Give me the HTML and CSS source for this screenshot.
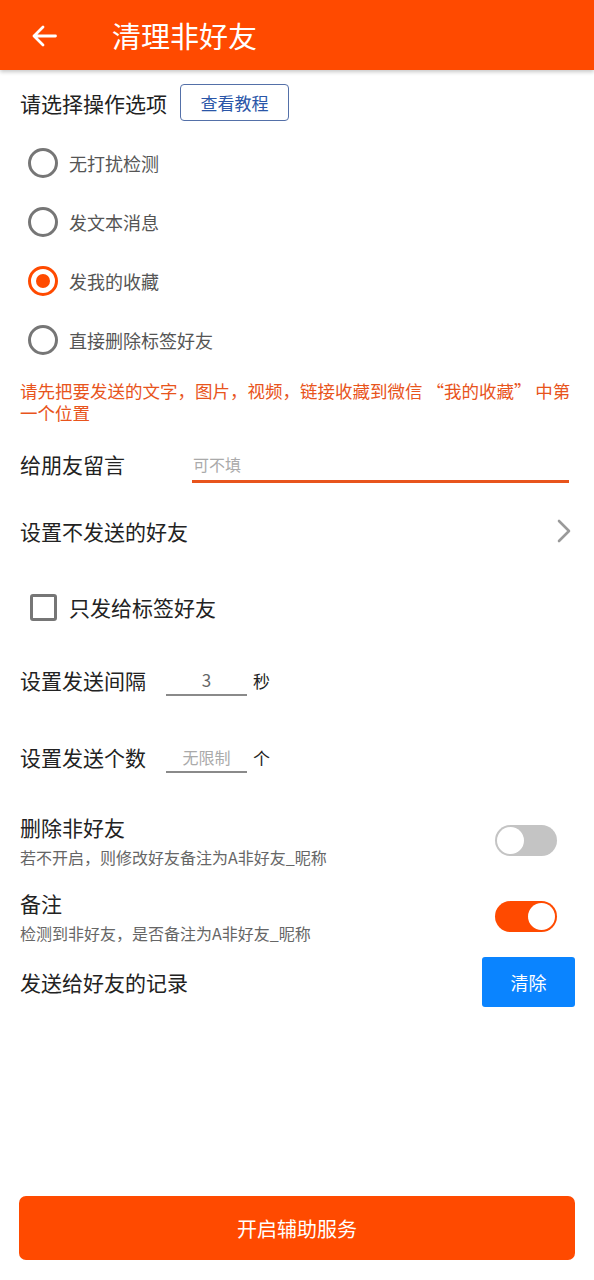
FILE: index.html
```html
<!DOCTYPE html>
<html lang="zh">
<head>
<meta charset="utf-8">
<title>清理非好友</title>
<link rel="stylesheet" href="styles.css">
</head>
<body>
<div class="page">
  <header class="appbar">
    <svg class="back" width="26" height="22" viewBox="0 0 26 22"><path d="M24.5 11H3M12 2L3 11l9 9" fill="none" stroke="#fff" stroke-width="2.8" stroke-linecap="round" stroke-linejoin="round"/></svg>
    <h1 class="title">清理非好友</h1>
  </header>

  <main class="content">
    <div class="top-row">
      <span class="label">请选择操作选项</span>
      <span class="tutorial-btn">查看教程</span>
    </div>

    <div class="radio-group">
      <div class="radio-row"><span class="radio"></span><span class="radio-text">无打扰检测</span></div>
      <div class="radio-row"><span class="radio"></span><span class="radio-text">发文本消息</span></div>
      <div class="radio-row"><span class="radio checked"></span><span class="radio-text">发我的收藏</span></div>
      <div class="radio-row"><span class="radio"></span><span class="radio-text">直接删除标签好友</span></div>
    </div>

    <p class="note">请先把要发送的文字，图片，视频，链接收藏到微信 “我的收藏” 中第一个位置</p>

    <div class="msg-row">
      <span class="label">给朋友留言</span>
      <input class="msg-input" type="text" placeholder="可不填">
    </div>

    <div class="nav-row">
      <span class="label">设置不发送的好友</span>
      <svg class="chevron" width="14" height="24" viewBox="0 0 14 24"><path d="M2 2l10 10-10 10" fill="none" stroke="#9a9a9a" stroke-width="2.6" stroke-linecap="round" stroke-linejoin="round"/></svg>
    </div>

    <div class="check-row">
      <span class="checkbox"></span>
      <span class="label">只发给标签好友</span>
    </div>

    <div class="num-row interval">
      <span class="label">设置发送间隔</span>
      <input class="num-input" type="text" value="3">
      <span class="unit">秒</span>
    </div>

    <div class="num-row count">
      <span class="label">设置发送个数</span>
      <input class="num-input" type="text" placeholder="无限制">
      <span class="unit">个</span>
    </div>

    <div class="switch-row first">
      <div class="switch-text">
        <span class="label">删除非好友</span>
        <span class="sub">若不开启，则修改好友备注为A非好友_昵称</span>
      </div>
      <span class="switch"><span class="thumb"></span></span>
    </div>

    <div class="switch-row">
      <div class="switch-text">
        <span class="label">备注</span>
        <span class="sub">检测到非好友，是否备注为A非好友_昵称</span>
      </div>
      <span class="switch on"><span class="thumb"></span></span>
    </div>

    <div class="record-row">
      <span class="label">发送给好友的记录</span>
      <span class="clear-btn">清除</span>
    </div>
  </main>

  <footer class="footer">
    <div class="start-btn">开启辅助服务</div>
  </footer>
</div>
</body>
</html>
```

FILE: styles.css
```css
* { box-sizing: border-box; }
html, body { margin: 0; padding: 0; background: #fff; }
body {
  font-family: "Noto Sans CJK SC", "Noto Sans", sans-serif;
  color: #222;
}
.page {
  min-height: 1280px;
  display: flex;
  flex-direction: column;
}
.appbar {
  height: 70px;
  background: #ff4a00;
  display: flex;
  align-items: center;
  box-shadow: 0 2px 4px rgba(0, 0, 0, 0.22);
  position: relative;
  z-index: 1;
}
.back { margin-left: 31px; margin-top: 1px; }
.title {
  margin: 0 0 0 55px;
  font-size: 29px;
  font-weight: 400;
  color: #fff;
  line-height: 1;
}
.content {
  padding: 14px 19px 0 20px;
}
.label {
  font-size: 21px;
  line-height: 28px;
  color: #222;
}
.top-row {
  height: 37px;
  display: flex;
  align-items: center;
}
.tutorial-btn {
  margin-left: 13px;
  width: 109px;
  height: 37px;
  border: 1px solid #5470a8;
  border-radius: 4px;
  display: flex;
  align-items: center;
  justify-content: center;
  font-size: 17px;
  color: #2a56a8;
}
.radio-group { margin-top: 12px; }
.radio-row {
  height: 59px;
  display: flex;
  align-items: center;
  padding-left: 8px;
}
.radio {
  width: 30px;
  height: 30px;
  border: 3px solid #767676;
  border-radius: 50%;
  display: flex;
  align-items: center;
  justify-content: center;
}
.radio.checked { border-color: #ff4a00; }
.radio.checked::after {
  content: "";
  width: 14px;
  height: 14px;
  border-radius: 50%;
  background: #ff4a00;
}
.radio-text {
  margin-left: 11px;
  font-size: 18px;
  color: #555;
}
.note {
  margin: 11px 0 0 0;
  font-size: 17.5px;
  line-height: 22px;
  color: #e8541c;
}
.msg-row {
  margin-top: 18px;
  height: 44px;
  display: flex;
  align-items: center;
}
.msg-input {
  margin-left: 67px;
  flex: 1;
  margin-right: 6px;
  height: 38px;
  border: none;
  border-bottom: 3px solid #e8541c;
  outline: none;
  padding: 2px 0 0 1px;
  font-family: "Noto Sans CJK SC", sans-serif;
  font-size: 16px;
  color: #333;
  background: transparent;
}
.msg-input::placeholder { color: #aaa; }
.nav-row {
  margin-top: 15px;
  height: 60px;
  display: flex;
  align-items: center;
  justify-content: space-between;
}
.chevron { margin-right: 4px; }
.check-row {
  margin-top: 16px;
  height: 60px;
  display: flex;
  align-items: center;
  padding-left: 10px;
}
.checkbox {
  width: 27px;
  height: 27px;
  border: 3px solid #767676;
  border-radius: 3px;
  margin-right: 12px;
}
.num-row {
  height: 60px;
  display: flex;
  align-items: center;
}
.num-row.interval { margin-top: 13px; }
.num-row.count { margin-top: 17px; }
.num-input {
  margin-left: 20px;
  width: 81px;
  height: 32px;
  border: none;
  border-bottom: 2px solid #8a8a8a;
  outline: none;
  padding: 0;
  text-align: center;
  font-family: "Noto Sans CJK SC", sans-serif;
  font-size: 17px;
  color: #666;
  background: transparent;
}
.num-input::placeholder { color: #aaa; font-size: 16px; }
.unit {
  margin-left: 6px;
  font-size: 17px;
  color: #222;
}
.switch-row {
  display: flex;
  align-items: center;
  justify-content: space-between;
  margin-top: 22px;
}
.switch-row.first { margin-top: 26px; }
.switch-text {
  display: flex;
  flex-direction: column;
}
.sub {
  margin-top: 6px;
  font-size: 16px;
  line-height: 20px;
  color: #666;
}
.switch {
  width: 62px;
  height: 31px;
  border-radius: 16px;
  background: #c4c4c4;
  display: flex;
  align-items: center;
  padding: 0 2px;
  margin-right: 18px;
}
.switch .thumb {
  width: 27px;
  height: 27px;
  border-radius: 50%;
  background: #fff;
}
.switch.on {
  background: #ff4a00;
  justify-content: flex-end;
}
.record-row {
  margin-top: 14px;
  height: 50px;
  display: flex;
  align-items: center;
  justify-content: space-between;
}
.clear-btn {
  width: 93px;
  height: 50px;
  background: #0a84ff;
  border-radius: 3px;
  color: #fff;
  font-size: 18px;
  display: flex;
  align-items: center;
  justify-content: center;
}
.footer {
  margin-top: auto;
  padding: 0 19px 20px 19px;
}
.start-btn {
  height: 64px;
  background: #ff4a00;
  border-radius: 7px;
  color: #fff;
  font-size: 20px;
  display: flex;
  align-items: center;
  justify-content: center;
}
```
